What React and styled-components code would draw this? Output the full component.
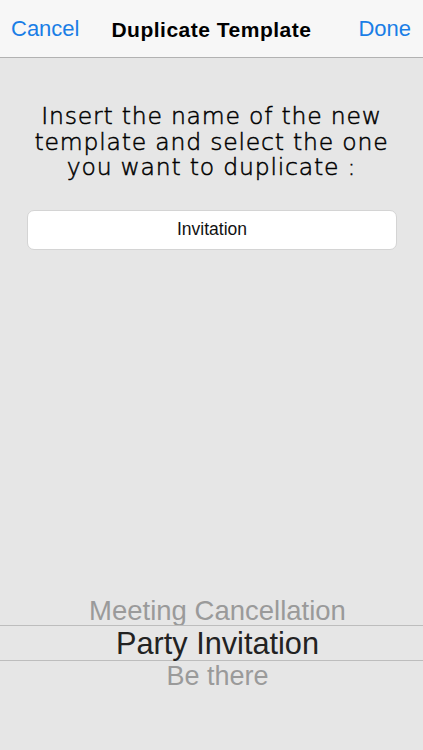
import styled, { createGlobalStyle } from "styled-components";

const GlobalStyle = createGlobalStyle`
  html, body {
    margin: 0;
    padding: 0;
    background: #e6e6e6;
  }
  body {
    font-family: "Liberation Sans", Arial, sans-serif;
  }
`;

const pickerItems = [
  { label: "Meeting Cancellation", state: "above" },
  { label: "Party Invitation", state: "selected" },
  { label: "Be there", state: "below" },
];

// per-row type sizes, tuned so the baselines sit where the wheel puts them
const rowStyle = {
  above: { size: "27.5px", lh: "37px", color: "#9a9a9a" },
  selected: { size: "30.7px", lh: "35px", color: "#222" },
  below: { size: "27px", lh: "30px", color: "#9a9a9a" },
};

export default function App() {
  return (
    <>
      <GlobalStyle />
      <Screen>
        <NavBar>
          <NavButton>Cancel</NavButton>
          <NavTitle>Duplicate Template</NavTitle>
          <NavButton>Done</NavButton>
        </NavBar>
        <Body>
          <Prompt>
            Insert the name of the new
            <br />
            template and select the one
            <br />
            you want to duplicate :
          </Prompt>
          <NameField defaultValue="Invitation" />
          <Picker>
            {pickerItems.map((item) => (
              <PickerRow key={item.label} $state={item.state}>
                {item.label}
              </PickerRow>
            ))}
          </Picker>
        </Body>
      </Screen>
    </>
  );
}

const Screen = styled.div`
  width: 423px;
  height: 750px;
  display: flex;
  flex-direction: column;
  background: #e6e6e6;
  overflow: hidden;
`;

const NavBar = styled.div`
  height: 57px;
  flex-shrink: 0;
  display: flex;
  align-items: center;
  justify-content: space-between;
  padding: 0 12px 0 11px;
  background: #f7f7f7;
  border-bottom: 1px solid #b2b2b2;
`;

const NavButton = styled.span`
  color: #1a7ee6;
  font-size: 22px;
`;

const NavTitle = styled.span`
  color: #000;
  font-size: 21px;
  font-weight: 700;
  letter-spacing: 0.5px;
  padding-top: 2px;
  margin-right: 15px;
`;

const Body = styled.div`
  flex: 1;
  display: flex;
  flex-direction: column;
  align-items: center;
  padding-top: 46px;
`;

const Prompt = styled.p`
  margin: 0;
  text-align: center;
  font-family: "DejaVu Sans", sans-serif;
  font-weight: 200;
  font-size: 23.5px;
  line-height: 25.5px;
  letter-spacing: 0.8px;
  color: #000;
  -webkit-text-stroke: 0.5px #000;
`;

const NameField = styled.input`
  box-sizing: border-box;
  margin-top: 29px;
  margin-left: 1px;
  width: 370px;
  height: 40px;
  border: 1px solid #d4d4d4;
  border-radius: 7px;
  background: #fff;
  text-align: center;
  font-family: "Liberation Sans", Arial, sans-serif;
  font-size: 17.5px;
  color: #111;
  outline: none;
`;

const Picker = styled.div`
  margin-top: auto;
  margin-bottom: 56px;
  width: 100%;
  display: flex;
  flex-direction: column;
`;

const PickerRow = styled.div`
  box-sizing: border-box;
  padding-left: 12px;
  text-align: center;
  white-space: nowrap;
  height: ${({ $state }) => ($state === "selected" ? "36px" : "33px")};
  font-size: ${({ $state }) => rowStyle[$state].size};
  line-height: ${({ $state }) => rowStyle[$state].lh};
  color: ${({ $state }) => rowStyle[$state].color};
  border-top: ${({ $state }) =>
    $state === "selected" ? "1px solid #bdbdbd" : "none"};
  border-bottom: ${({ $state }) =>
    $state === "selected" ? "1px solid #bdbdbd" : "none"};
`;
